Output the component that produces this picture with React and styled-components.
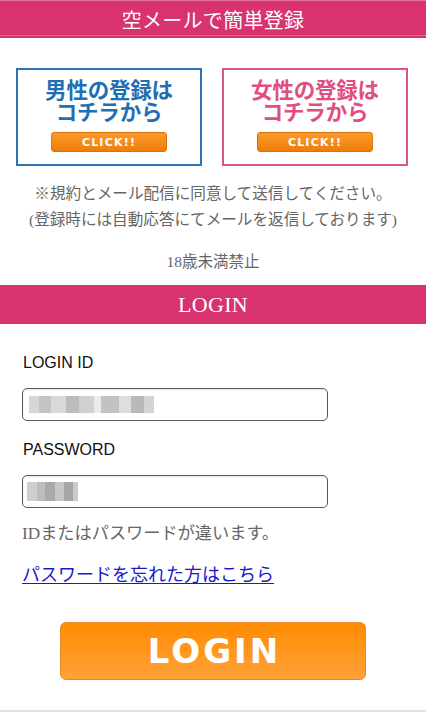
import React from 'react';
import styled, { createGlobalStyle } from 'styled-components';

const GlobalStyle = createGlobalStyle`
  html, body {
    margin: 0;
    padding: 0;
    background: #ffffff;
  }
  body {
    font-family: "Liberation Serif", "Noto Sans CJK JP", serif;
  }
`;

const Page = styled.div`
  width: 426px;
  min-height: 712px;
  display: flex;
  flex-direction: column;
  border-bottom: 2px solid #e2e2e2;
  box-sizing: border-box;
`;

const TitleBar = styled.div`
  height: ${(p) => p.$h}px;
  margin-top: ${(p) => p.$top || 0}px;
  background: #d8336f;
  box-shadow: ${(p) =>
    p.$lined
      ? 'inset 0 1px 0 #e7729d, inset 0 -2px 0 #d8336f, inset 0 -3px 0 #e66b97'
      : 'none'};
  display: flex;
  align-items: center;
  justify-content: center;
  color: #ffffff;
  font-family: "Liberation Serif", "Noto Sans CJK JP", serif;
  font-size: ${(p) => p.$size || 20}px;
  letter-spacing: 0.3px;
`;

const BannerRow = styled.div`
  display: flex;
  gap: 20px;
  padding: 30px 18px 0 16px;
`;

const Banner = styled.a`
  flex: 1;
  height: 98px;
  box-sizing: border-box;
  border: 2px solid ${(p) => p.$color};
  background: #ffffff;
  display: flex;
  flex-direction: column;
  align-items: center;
  padding-top: 8px;
  text-decoration: none;
  cursor: pointer;
`;

const BannerLine = styled.div`
  height: 22px;
  display: flex;
  align-items: center;
  overflow: visible;
  color: ${(p) => p.$color};
  font-family: "Noto Sans CJK JP", sans-serif;
  font-weight: 700;
  font-size: 21.5px;
  line-height: 22px;
  letter-spacing: -0.2px;
`;

const ClickButton = styled.div`
  margin-top: 10px;
  width: 116px;
  height: 20px;
  border-radius: 3px;
  background: linear-gradient(#fb9a2a, #f07d0a);
  border: 1px solid #d8730f;
  box-sizing: border-box;
  display: flex;
  align-items: center;
  justify-content: center;
  color: #ffffff;
  font-family: "DejaVu Sans", sans-serif;
  font-weight: 700;
  font-size: 11px;
  letter-spacing: 1.2px;
`;

const Notes = styled.div`
  margin-top: 15px;
  text-align: center;
  color: #666666;
  font-size: 15.6px;
  line-height: 26px;
`;

const AgeNote = styled.div`
  margin-top: 16px;
  text-align: center;
  color: #666666;
  font-size: 15.5px;
`;

const Form = styled.form`
  display: flex;
  flex-direction: column;
  padding: 0 0 0 22px;
`;

const Label = styled.label`
  font-family: "Liberation Sans", "Noto Sans CJK JP", sans-serif;
  font-size: 16px;
  color: #111111;
  margin: ${(p) => p.$top}px 0 0 1px;
  line-height: 20px;
`;

const Field = styled.div`
  width: 306px;
  height: 33px;
  margin-top: 15px;
  box-sizing: border-box;
  border: 1.5px solid #5b5b5b;
  border-radius: 5px;
  background: #ffffff;
  box-shadow: inset 0 1px 2px rgba(0, 0, 0, 0.12);
  display: flex;
  align-items: center;
  padding-left: ${(p) => p.$pad}px;
`;

const Blur = styled.div`
  width: ${(p) => p.$w}px;
  height: ${(p) => p.$h}px;
  background: linear-gradient(90deg, ${(p) => p.$stops});
  filter: blur(0.6px);
`;

const ErrorText = styled.div`
  margin-top: 14px;
  color: #666666;
  font-size: 17.2px;
  line-height: 24px;
`;

const ForgotLink = styled.a`
  margin-top: 17px;
  color: #1a1acc;
  font-size: 18px;
  line-height: 24px;
  text-decoration: underline;
  text-underline-offset: 2px;
  align-self: flex-start;
`;

const LoginButton = styled.button`
  margin: 35px 0 0 38px;
  width: 306px;
  height: 58px;
  border-radius: 6px;
  border: 1px solid #e58a2a;
  background: linear-gradient(#ff8c00, #ffa23a);
  color: #ffffff;
  font-family: "DejaVu Sans", sans-serif;
  font-weight: 700;
  font-size: 34px;
  letter-spacing: 3px;
  padding: 0 0 0 3px;
  cursor: pointer;
`;

const idStops =
  '#d6d6d6 0 8%, #c4c4c4 8% 18%, #d9d9d9 18% 30%, #bcbcbc 30% 40%, #d0d0d0 40% 52%, #eaeaea 52% 58%, #c2c2c2 58% 72%, #dedede 72% 82%, #b9b9b9 82% 92%, #d4d4d4 92% 100%';
const pwStops =
  '#cfcfcf 0 20%, #bdbdbd 20% 35%, #a9a9a9 35% 55%, #c6c6c6 55% 72%, #a6a6a6 72% 90%, #cbcbcb 90% 100%';

const banners = [
  { border: '#2f73b3', text: '#1f6fb4', title: '男性の登録は' },
  { border: '#d9577f', text: '#e04f80', title: '女性の登録は' },
];

const App = () => {
  return (
    <Page>
      <GlobalStyle />
      <TitleBar $h={38} $lined>空メールで簡単登録</TitleBar>

      <BannerRow>
        {banners.map((b) => (
          <Banner key={b.title} $color={b.border}>
            <BannerLine $color={b.text}>{b.title}</BannerLine>
            <BannerLine $color={b.text}>コチラから</BannerLine>
            <ClickButton>CLICK!!</ClickButton>
          </Banner>
        ))}
      </BannerRow>

      <Notes>
        ※規約とメール配信に同意して送信してください。
        <br />
        (登録時には自動応答にてメールを返信しております)
      </Notes>
      <AgeNote>18歳未満禁止</AgeNote>

      <TitleBar $h={39} $top={14} $size={22}>LOGIN</TitleBar>

      <Form onSubmit={(e) => e.preventDefault()}>
        <Label $top={29}>LOGIN ID</Label>
        <Field $pad={6}>
          <Blur $w={125} $h={17} $stops={idStops} />
        </Field>
        <Label $top={19}>PASSWORD</Label>
        <Field $pad={4}>
          <Blur $w={51} $h={19} $stops={pwStops} />
        </Field>
        <ErrorText>IDまたはパスワードが違います。</ErrorText>
        <ForgotLink href="#">パスワードを忘れた方はこちら</ForgotLink>
        <LoginButton type="submit">LOGIN</LoginButton>
      </Form>
    </Page>
  );
};

export default App;
